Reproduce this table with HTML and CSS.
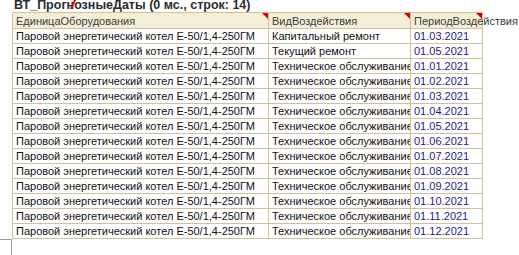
FILE: index.html
```html
<!DOCTYPE html>
<html>
<head>
<meta charset="utf-8">
<link rel="stylesheet" href="styles.css">
</head>
<body>
<div class="page">
  <div class="title">ВТ_ПрогнозныеДаты (0 мс., строк: 14)<span class="redmark"></span></div>
  <table class="grid">
    <colgroup>
      <col class="c1"><col class="c2"><col class="c3">
    </colgroup>
    <thead>
      <tr>
        <th><span class="th">ЕдиницаОборудования</span><span class="corner"></span></th>
        <th><span class="th">ВидВоздействия</span><span class="corner"></span></th>
        <th class="over"><span class="th">ПериодВоздействия</span><span class="corner"></span></th>
      </tr>
    </thead>
    <tbody>
      <tr><td>Паровой энергетический котел Е-50/1,4-250ГМ</td><td>Капитальный ремонт</td><td class="d">01.03.2021</td></tr>
      <tr><td>Паровой энергетический котел Е-50/1,4-250ГМ</td><td>Текущий ремонт</td><td class="d">01.05.2021</td></tr>
      <tr><td>Паровой энергетический котел Е-50/1,4-250ГМ</td><td>Техническое обслуживание</td><td class="d">01.01.2021</td></tr>
      <tr><td>Паровой энергетический котел Е-50/1,4-250ГМ</td><td>Техническое обслуживание</td><td class="d">01.02.2021</td></tr>
      <tr><td>Паровой энергетический котел Е-50/1,4-250ГМ</td><td>Техническое обслуживание</td><td class="d">01.03.2021</td></tr>
      <tr><td>Паровой энергетический котел Е-50/1,4-250ГМ</td><td>Техническое обслуживание</td><td class="d">01.04.2021</td></tr>
      <tr><td>Паровой энергетический котел Е-50/1,4-250ГМ</td><td>Техническое обслуживание</td><td class="d">01.05.2021</td></tr>
      <tr><td>Паровой энергетический котел Е-50/1,4-250ГМ</td><td>Техническое обслуживание</td><td class="d">01.06.2021</td></tr>
      <tr><td>Паровой энергетический котел Е-50/1,4-250ГМ</td><td>Техническое обслуживание</td><td class="d">01.07.2021</td></tr>
      <tr><td>Паровой энергетический котел Е-50/1,4-250ГМ</td><td>Техническое обслуживание</td><td class="d">01.08.2021</td></tr>
      <tr><td>Паровой энергетический котел Е-50/1,4-250ГМ</td><td>Техническое обслуживание</td><td class="d">01.09.2021</td></tr>
      <tr><td>Паровой энергетический котел Е-50/1,4-250ГМ</td><td>Техническое обслуживание</td><td class="d">01.10.2021</td></tr>
      <tr><td>Паровой энергетический котел Е-50/1,4-250ГМ</td><td>Техническое обслуживание</td><td class="d">01.11.2021</td></tr>
      <tr><td>Паровой энергетический котел Е-50/1,4-250ГМ</td><td>Техническое обслуживание</td><td class="d">01.12.2021</td></tr>
    </tbody>
  </table>
  <div class="below"></div>
</div>
</body>
</html>
```
FILE: styles.css
```css
html, body {
  margin: 0;
  padding: 0;
  background: #ffffff;
  overflow: hidden;
}
.page {
  width: 519px;
  height: 255px;
  overflow: hidden;
  font-family: "Liberation Sans", Arial, sans-serif;
  position: relative;
}
.title {
  position: relative;
  height: 12px;
  line-height: 11px;
  padding-left: 14px;
  font-size: 12.5px;
  font-weight: bold;
  color: #2b2b2b;
  white-space: nowrap;
}
.redmark {
  position: absolute;
  left: 72px;
  top: 0;
  width: 2px;
  height: 9px;
  background: #e00000;
  transform: skewX(-25deg);
}
.grid {
  margin-left: 12px;
  border-collapse: collapse;
  table-layout: fixed;
  width: 470px;
  font-size: 11px;
}
.c1 { width: 256px; }
.c2 { width: 142px; }
.c3 { width: 72px; }
.grid th, .grid td {
  border: 1px solid #cfc29a;
  height: 14px;
  padding: 0 0 0 3px;
  line-height: 14px;
  white-space: nowrap;
  overflow: hidden;
  text-align: left;
  font-weight: normal;
}
.grid th {
  position: relative;
  background: #f4eed8;
  color: #3c3c3c;
  height: 15px;
}
.grid th.over {
  overflow: visible;
}
.corner {
  position: absolute;
  top: 0;
  right: 0;
  width: 0;
  height: 0;
  border-top: 6px solid #e00000;
  border-left: 6px solid transparent;
}
.grid td {
  color: #111111;
}
.grid td.d {
  color: #1c1c8a;
}
.below {
  margin-top: 0;
  height: 20px;
  width: 12px;
  border-top: 1px solid #9a9a9a;
  border-right: 1px solid #9a9a9a;
  box-sizing: border-box;
}
```
